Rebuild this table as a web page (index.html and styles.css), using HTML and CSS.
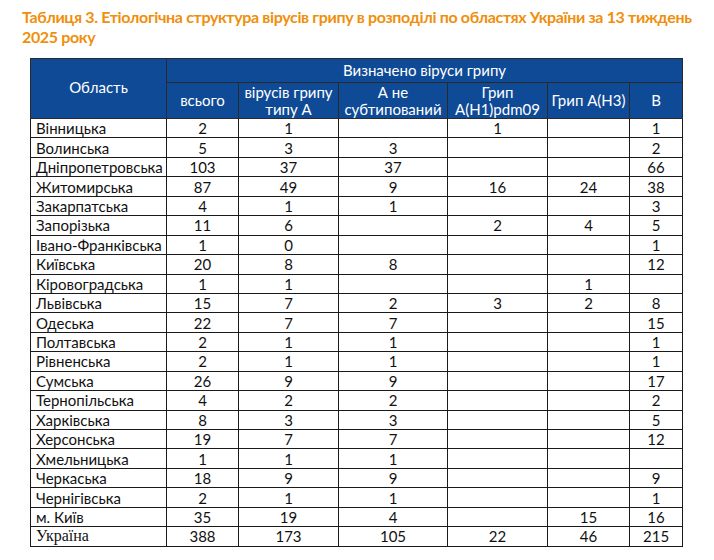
FILE: index.html
```html
<!DOCTYPE html>
<html lang="uk">
<head>
<meta charset="utf-8">
<link rel="stylesheet" href="styles.css">
</head>
<body>
<h1 class="title">Таблиця 3. Етіологічна структура вірусів грипу в розподілі по областях України за 13 тиждень 2025 року</h1>
<table class="data">
  <colgroup>
    <col class="c-name"><col class="c-all"><col class="c-a"><col class="c-ans"><col class="c-h1"><col class="c-h3"><col class="c-b">
  </colgroup>
  <thead>
    <tr class="h1row">
      <th rowspan="2" class="h-name">Область</th>
      <th colspan="6" class="h-group">Визначено віруси грипу</th>
    </tr>
    <tr class="h2row">
      <th>всього</th>
      <th>вірусів грипу<br>типу А</th>
      <th>А не<br>субтипований</th>
      <th>Грип<br>А(H1)pdm09</th>
      <th>Грип А(H3)</th>
      <th>В</th>
    </tr>
  </thead>
  <tbody>
    <tr><td>Вінницька</td><td>2</td><td>1</td><td></td><td>1</td><td></td><td>1</td></tr>
    <tr><td>Волинська</td><td>5</td><td>3</td><td>3</td><td></td><td></td><td>2</td></tr>
    <tr><td>Дніпропетровська</td><td>103</td><td>37</td><td>37</td><td></td><td></td><td>66</td></tr>
    <tr><td>Житомирська</td><td>87</td><td>49</td><td>9</td><td>16</td><td>24</td><td>38</td></tr>
    <tr><td>Закарпатська</td><td>4</td><td>1</td><td>1</td><td></td><td></td><td>3</td></tr>
    <tr><td>Запорізька</td><td>11</td><td>6</td><td></td><td>2</td><td>4</td><td>5</td></tr>
    <tr><td>Івано-Франківська</td><td>1</td><td>0</td><td></td><td></td><td></td><td>1</td></tr>
    <tr><td>Київська</td><td>20</td><td>8</td><td>8</td><td></td><td></td><td>12</td></tr>
    <tr><td>Кіровоградська</td><td>1</td><td>1</td><td></td><td></td><td>1</td><td></td></tr>
    <tr><td>Львівська</td><td>15</td><td>7</td><td>2</td><td>3</td><td>2</td><td>8</td></tr>
    <tr><td>Одеська</td><td>22</td><td>7</td><td>7</td><td></td><td></td><td>15</td></tr>
    <tr><td>Полтавська</td><td>2</td><td>1</td><td>1</td><td></td><td></td><td>1</td></tr>
    <tr><td>Рівненська</td><td>2</td><td>1</td><td>1</td><td></td><td></td><td>1</td></tr>
    <tr><td>Сумська</td><td>26</td><td>9</td><td>9</td><td></td><td></td><td>17</td></tr>
    <tr><td>Тернопільська</td><td>4</td><td>2</td><td>2</td><td></td><td></td><td>2</td></tr>
    <tr><td>Харківська</td><td>8</td><td>3</td><td>3</td><td></td><td></td><td>5</td></tr>
    <tr><td>Херсонська</td><td>19</td><td>7</td><td>7</td><td></td><td></td><td>12</td></tr>
    <tr><td>Хмельницька</td><td>1</td><td>1</td><td>1</td><td></td><td></td><td></td></tr>
    <tr><td>Черкаська</td><td>18</td><td>9</td><td>9</td><td></td><td></td><td>9</td></tr>
    <tr><td>Чернігівська</td><td>2</td><td>1</td><td>1</td><td></td><td></td><td>1</td></tr>
    <tr><td>м. Київ</td><td>35</td><td>19</td><td>4</td><td></td><td>15</td><td>16</td></tr>
    <tr class="total"><td class="serif">Україна</td><td>388</td><td>173</td><td>105</td><td>22</td><td>46</td><td>215</td></tr>
  </tbody>
</table>
</body>
</html>
```
FILE: styles.css
```css
html, body {
  margin: 0;
  padding: 0;
  background: #ffffff;
}
body {
  font-family: Lato, "Open Sans", sans-serif;
  color: #111;
}
.title {
  margin: 0;
  padding: 7px 8px 0 22px;
  font-size: 16px;
  line-height: 20px;
  font-weight: 700;
  color: #ef8f0c;
  letter-spacing: -0.35px;
}
.data {
  margin: 11px 0 0 30px;
  border-collapse: collapse;
  width: 652px;
  table-layout: fixed;
  font-size: 15px;
}
.c-name { width: 136px; }
.c-all { width: 72px; }
.c-a { width: 100px; }
.c-ans { width: 109px; }
.c-h1 { width: 100px; }
.c-h3 { width: 82px; }
.c-b { width: 53px; }
.data th {
  background: #0f4a96;
  color: #ffffff;
  font-weight: 400;
  border: 1px solid #2a2a2a;
  padding: 0;
  line-height: 17px;
  text-align: center;
}
.h1row th { height: 23px; }
.h2row th { height: 35px; }
.data th.h-name {
  vertical-align: middle;
  padding-bottom: 2px;
}
.data td {
  border: 1px solid #1a1a1a;
  padding: 0;
  height: 18.45px;
  line-height: 18px;
  text-align: center;
  white-space: nowrap;
}
.data td:first-child {
  text-align: left;
  padding-left: 5px;
}
.data td.serif {
  font-family: "Liberation Serif", serif;
  font-size: 16px;
}
```
